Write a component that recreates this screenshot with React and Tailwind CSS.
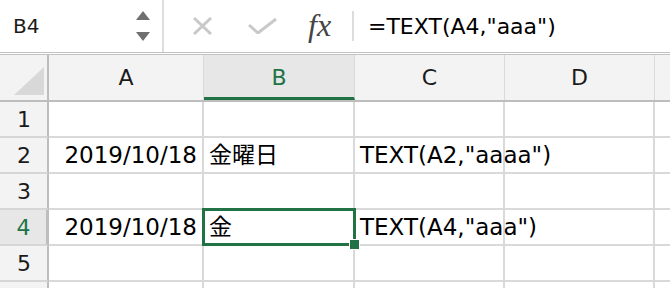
import React from 'react';

const cellFont = { fontFamily: '"DejaVu Sans", "Noto Sans CJK JP", sans-serif' };

const columns = [
  { key: 'A', width: 'w-[155px]' },
  { key: 'B', width: 'w-[151px]' },
  { key: 'C', width: 'w-[150px]' },
  { key: 'D', width: 'w-[150px]' },
];

const rows = [
  { n: 1, cells: {} },
  { n: 2, cells: { A: '2019/10/18', B: '金曜日', C: 'TEXT(A2,"aaaa")' } },
  { n: 3, cells: {} },
  { n: 4, cells: { A: '2019/10/18', B: '金', C: 'TEXT(A4,"aaa")' } },
  { n: 5, cells: {} },
  { n: 6, cells: {}, hidden: true },
];

function FormulaBar() {
  return (
    <div className="flex h-[55px] border-b-[3px] border-double border-[#c2c2c2] bg-white">
      <div className="flex w-[164px] items-center justify-between border-r-2 border-[#dedede] pl-[13px] pr-[12px]">
        <span className="text-[20px] text-[#1a1a1a]">B4</span>
        <div className="flex flex-col gap-[12px]">
          <svg width="14" height="9" viewBox="0 0 14 9"><path d="M7 0 L14 9 L0 9 Z" fill="#6f6f6f" /></svg>
          <svg width="14" height="9" viewBox="0 0 14 9"><path d="M0 0 L14 0 L7 9 Z" fill="#6f6f6f" /></svg>
        </div>
      </div>
      <div className="flex items-center">
        <svg className="ml-[28px]" width="21" height="18" viewBox="0 0 21 18">
          <path d="M2 1 L19 17 M19 1 L2 17" stroke="#c9c9c9" strokeWidth="3" />
        </svg>
        <svg className="ml-[35px]" width="29" height="16" viewBox="0 0 29 16">
          <path d="M1 7 L10 15 L28 1" stroke="#c9c9c9" strokeWidth="3" fill="none" />
        </svg>
        <span
          className="ml-[31px] mb-[3px] w-[32px] text-[32px] italic leading-none text-[#444]"
          style={{ fontFamily: '"Liberation Serif", serif' }}
        >
          fx
        </span>
        <div className="ml-[12px] h-[30px] w-[2px] bg-[#dcdcdc]" />
      </div>
      <div className="flex flex-1 items-center pl-[14px] text-[22px] text-black" style={cellFont}>
        =TEXT(A4,"aaa")
      </div>
    </div>
  );
}

function HeaderRow() {
  return (
    <div className="flex h-[47px] border-b-2 border-[#bdbdbd] bg-[#f3f3f3] text-[22px]">
      <div className="flex w-[49px] shrink-0 items-end justify-end border-r-2 border-[#bdbdbd] pb-[5px] pr-[3px]">
        <svg width="30" height="28" viewBox="0 0 30 28"><path d="M30 0 L30 28 L0 28 Z" fill="#d8d8d8" /></svg>
      </div>
      {columns.map((c) => {
        const selected = c.key === 'B';
        return (
          <div
            key={c.key}
            className={`flex shrink-0 items-center justify-center border-r border-[#dadada] ${c.width} ${
              selected ? 'border-b-[3px] border-b-[#217346] bg-[#e7e7e7] pt-[3px] text-[#217346]' : 'text-[#1a1a1a]'
            }`}
          >
            {c.key}
          </div>
        );
      })}
      <div className="flex-1" />
    </div>
  );
}

function Row({ row }) {
  const active = row.n === 4;
  return (
    <div className="flex h-[36px] text-[23px]">
      <div
        className={`flex w-[49px] shrink-0 items-center justify-center border-b-2 border-r-2 border-[#d6d6d6] border-r-[#bdbdbd] pl-[1px] text-[22px] ${
          active ? 'border-r-[3px] border-r-[#217346] bg-[#e7e7e7] text-[#217346]' : 'bg-[#f3f3f3] text-[#1a1a1a]'
        }`}
      >
        {row.hidden ? '' : row.n}
      </div>
      {columns.map((c) => {
        const value = row.cells[c.key];
        const isDate = c.key === 'A';
        const selected = active && c.key === 'B';
        return (
          <div
            key={c.key}
            className={`relative flex shrink-0 items-center whitespace-nowrap border-b-2 border-r-2 border-[#d9d9d9] text-black ${c.width} ${
              isDate ? 'justify-end pr-[5px]' : 'pl-[5px]'
            }`}
          >
            {value}
            {selected && (
              <>
                <div className="absolute -bottom-[2px] -left-[2px] -right-[3px] -top-[2px] z-10 border-[3px] border-[#217346]" />
                <div className="absolute -bottom-[6px] -right-[7px] z-20 h-[11px] w-[11px] border border-white bg-[#217346]" />
              </>
            )}
          </div>
        );
      })}
      <div className="flex-1 border-b-2 border-[#d9d9d9]" />
    </div>
  );
}

export default function App() {
  return (
    <div className="h-[288px] w-[670px] overflow-hidden bg-white" style={cellFont}>
      <FormulaBar />
      <HeaderRow />
      {rows.map((r) => (
        <Row key={r.n} row={r} />
      ))}
    </div>
  );
}
